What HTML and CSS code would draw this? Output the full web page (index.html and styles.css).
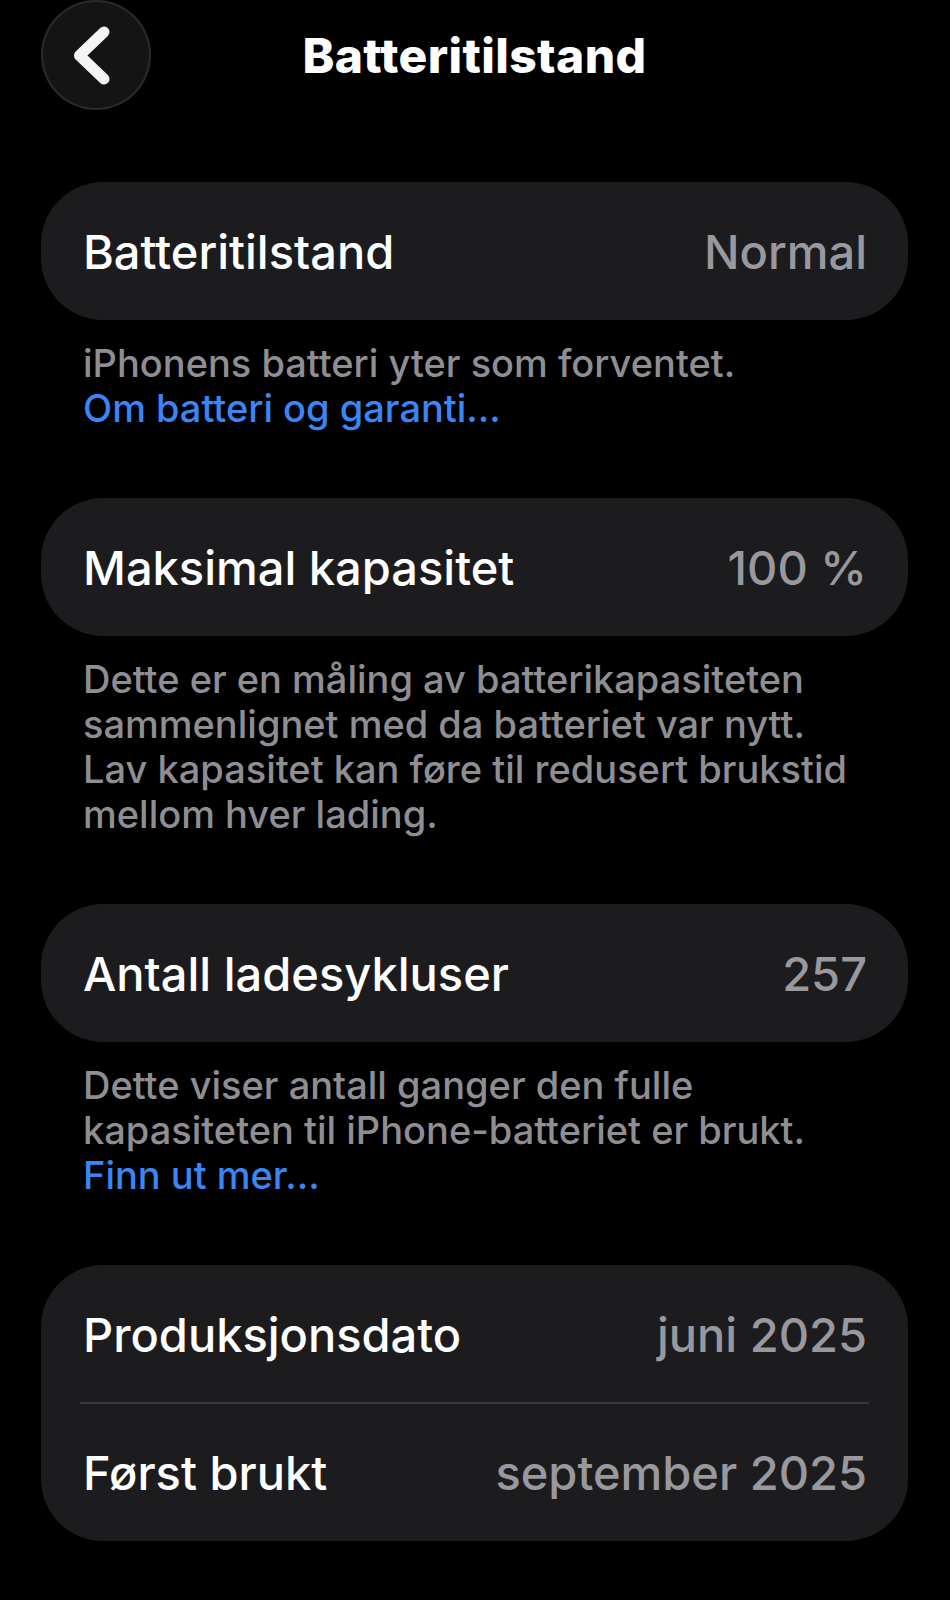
FILE: index.html
```html
<!DOCTYPE html>
<html lang="nb">
<head>
    <meta charset="UTF-8">
    <meta name="viewport" content="width=device-width, initial-scale=1.0">
    <title>Batteritilstand</title>
    <link rel="stylesheet" href="styles.css">
</head>
<body>
    <div class="page">
        <header class="nav">
            <button class="back-btn" aria-label="Tilbake">
                <svg width="110" height="110" viewBox="0 0 110 110">
                    <path d="M63 32 L38.5 55.5 L63 79" fill="none" stroke="#f4f4f4" stroke-width="11" stroke-linecap="round" stroke-linejoin="round"/>
                </svg>
            </button>
            <h1>Batteritilstand</h1>
            <span></span>
        </header>

        <section class="group">
            <div class="card">
                <div class="row">
                    <span class="label">Batteritilstand</span>
                    <span class="value">Normal</span>
                </div>
            </div>
            <p class="note">
                iPhonens batteri yter som forventet.<br>
                <a href="#">Om batteri og garanti...</a>
            </p>
        </section>

        <section class="group">
            <div class="card">
                <div class="row">
                    <span class="label">Maksimal kapasitet</span>
                    <span class="value">100 %</span>
                </div>
            </div>
            <p class="note">
                Dette er en måling av batterikapasiteten<br>
                sammenlignet med da batteriet var nytt.<br>
                Lav kapasitet kan føre til redusert brukstid<br>
                mellom hver lading.
            </p>
        </section>

        <section class="group">
            <div class="card">
                <div class="row">
                    <span class="label">Antall ladesykluser</span>
                    <span class="value">257</span>
                </div>
            </div>
            <p class="note">
                Dette viser antall ganger den fulle<br>
                kapasiteten til iPhone-batteriet er brukt.<br>
                <a href="#">Finn ut mer...</a>
            </p>
        </section>

        <section class="group">
            <div class="card">
                <div class="row">
                    <span class="label">Produksjonsdato</span>
                    <span class="value">juni 2025</span>
                </div>
                <div class="row">
                    <span class="label">Først brukt</span>
                    <span class="value">september 2025</span>
                </div>
            </div>
        </section>
    </div>
</body>
</html>
```

FILE: styles.css
```css
body {
    margin: 0;
    background: #000;
    color: #fff;
    font-family: Inter, 'Liberation Sans', sans-serif;
}
.page {
    padding: 0 42px 0 41px;
}
.nav {
    display: grid;
    grid-template-columns: 110px 1fr 110px;
    align-items: center;
    height: 110px;
    margin-bottom: 72px;
}
.back-btn {
    width: 110px;
    height: 110px;
    padding: 0;
    border: none;
    border-radius: 50%;
    background: #141414;
    box-shadow: inset 0 0 0 2px #2a2a2c;
    cursor: pointer;
    display: block;
}
.back-btn svg {
    display: block;
}
.nav h1 {
    margin: 0;
    text-align: center;
    font-size: 48px;
    font-weight: 800;
    letter-spacing: 0.4px;
}
.card {
    background: #1c1c1e;
    border-radius: 62px;
}
.row {
    display: flex;
    justify-content: space-between;
    align-items: center;
    height: 138px;
    padding: 0 41px 0 42px;
    font-size: 47px;
    font-weight: 500;
    position: relative;
}
.row + .row::before {
    content: "";
    position: absolute;
    top: -1px;
    left: 39px;
    right: 39px;
    height: 2px;
    background: #38383a;
}
.label {
    color: #fff;
}
.value {
    color: #98989e;
}
.note {
    margin: 0;
    padding: 21px 42px 67px;
    font-size: 38px;
    font-weight: 500;
    line-height: 45px;
    color: #8e8e93;
}
.note a {
    color: #3a86f6;
    text-decoration: none;
}
```
